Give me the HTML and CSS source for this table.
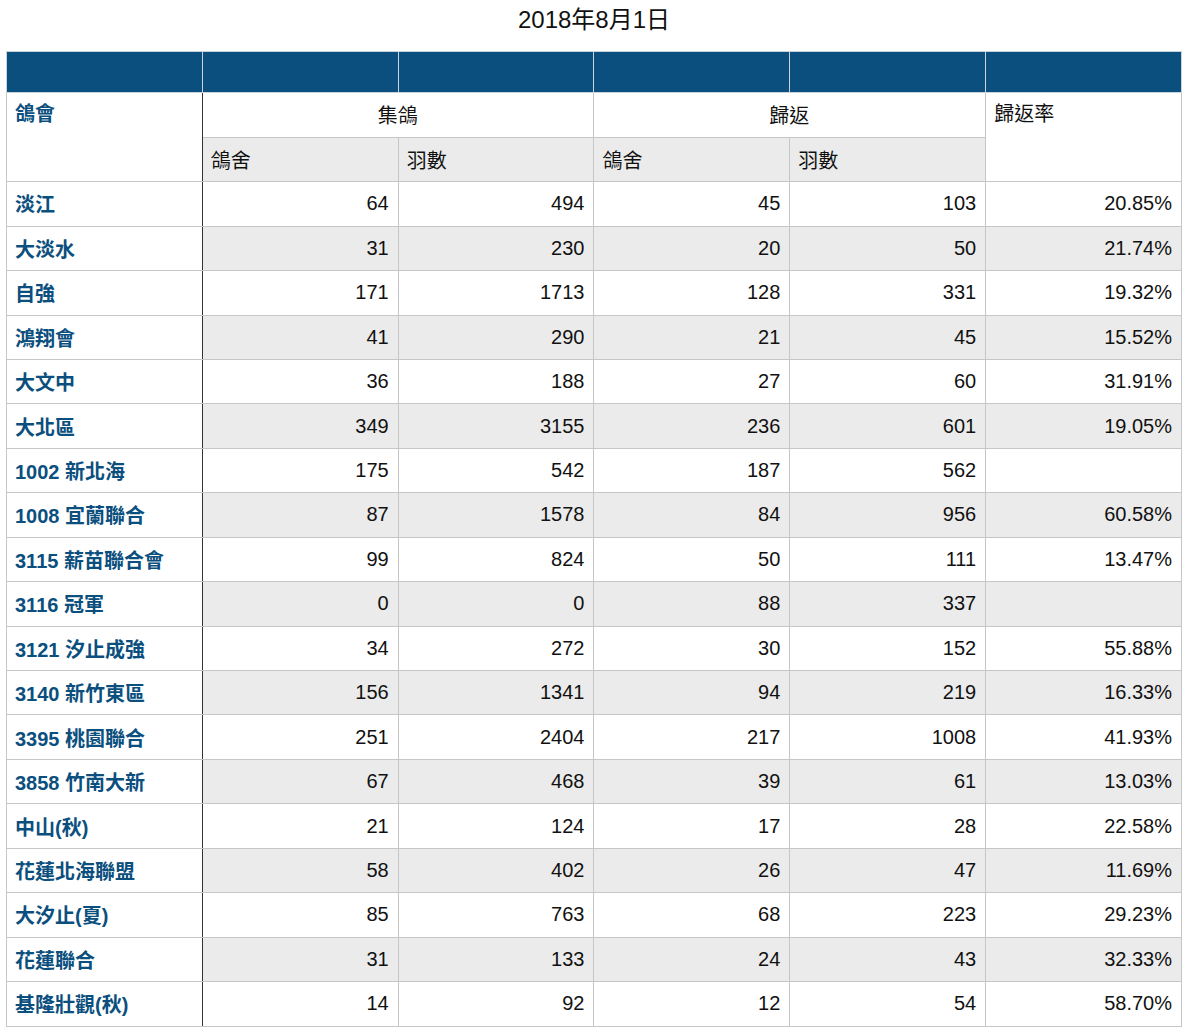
FILE: index.html
```html
<!DOCTYPE html>
<html lang="zh-Hant">
<head>
<meta charset="utf-8">
<title>2018年8月1日</title>
<link rel="stylesheet" href="styles.css">
</head>
<body>
<div class="page">
  <h1 class="title">2018年8月1日</h1>
  <table class="report">
    <thead>
      <tr class="band">
        <th></th><th></th><th></th><th></th><th></th><th></th>
      </tr>
      <tr class="group">
        <th class="club-head" rowspan="2">鴿會</th>
        <th class="center" colspan="2">集鴿</th>
        <th class="center" colspan="2">歸返</th>
        <th class="rate-head" rowspan="2">歸返率</th>
      </tr>
      <tr class="sub">
        <th>鴿舍</th><th>羽數</th><th>鴿舍</th><th>羽數</th>
      </tr>
    </thead>
    <tbody>
      <tr><td class="club">淡江</td><td>64</td><td>494</td><td>45</td><td>103</td><td>20.85%</td></tr>
      <tr><td class="club">大淡水</td><td>31</td><td>230</td><td>20</td><td>50</td><td>21.74%</td></tr>
      <tr><td class="club">自強</td><td>171</td><td>1713</td><td>128</td><td>331</td><td>19.32%</td></tr>
      <tr><td class="club">鴻翔會</td><td>41</td><td>290</td><td>21</td><td>45</td><td>15.52%</td></tr>
      <tr><td class="club">大文中</td><td>36</td><td>188</td><td>27</td><td>60</td><td>31.91%</td></tr>
      <tr><td class="club">大北區</td><td>349</td><td>3155</td><td>236</td><td>601</td><td>19.05%</td></tr>
      <tr><td class="club">1002 新北海</td><td>175</td><td>542</td><td>187</td><td>562</td><td></td></tr>
      <tr><td class="club">1008 宜蘭聯合</td><td>87</td><td>1578</td><td>84</td><td>956</td><td>60.58%</td></tr>
      <tr><td class="club">3115 薪苗聯合會</td><td>99</td><td>824</td><td>50</td><td>111</td><td>13.47%</td></tr>
      <tr><td class="club">3116 冠軍</td><td>0</td><td>0</td><td>88</td><td>337</td><td></td></tr>
      <tr><td class="club">3121 汐止成強</td><td>34</td><td>272</td><td>30</td><td>152</td><td>55.88%</td></tr>
      <tr><td class="club">3140 新竹東區</td><td>156</td><td>1341</td><td>94</td><td>219</td><td>16.33%</td></tr>
      <tr><td class="club">3395 桃園聯合</td><td>251</td><td>2404</td><td>217</td><td>1008</td><td>41.93%</td></tr>
      <tr><td class="club">3858 竹南大新</td><td>67</td><td>468</td><td>39</td><td>61</td><td>13.03%</td></tr>
      <tr><td class="club">中山(秋)</td><td>21</td><td>124</td><td>17</td><td>28</td><td>22.58%</td></tr>
      <tr><td class="club">花蓮北海聯盟</td><td>58</td><td>402</td><td>26</td><td>47</td><td>11.69%</td></tr>
      <tr><td class="club">大汐止(夏)</td><td>85</td><td>763</td><td>68</td><td>223</td><td>29.23%</td></tr>
      <tr><td class="club">花蓮聯合</td><td>31</td><td>133</td><td>24</td><td>43</td><td>32.33%</td></tr>
      <tr><td class="club">基隆壯觀(秋)</td><td>14</td><td>92</td><td>12</td><td>54</td><td>58.70%</td></tr>
    </tbody>
  </table>
</div>
</body>
</html>
```

FILE: styles.css
```css
html, body {
  margin: 0;
  padding: 0;
  background: #ffffff;
}

body {
  font-family: "Liberation Sans", "Noto Sans CJK TC", sans-serif;
  color: #111111;
}

.page {
  padding: 0 6px 0 6px;
}

.title {
  margin: 0;
  padding-top: 5px;
  height: 30px;
  line-height: 30px;
  margin-bottom: 16px;
  text-align: center;
  font-size: 24px;
  font-weight: normal;
  color: #111111;
}

.report {
  width: 100%;
  border-collapse: collapse;
  table-layout: fixed;
  font-size: 20px;
}

.report th,
.report td {
  border: 1px solid #c6c6c6;
  padding: 0 9px 0 8px;
  box-sizing: border-box;
}

.band th {
  background: #0b4f7e;
  border-color: #c8d3dc;
  height: 40.5px;
}

.report thead th {
  font-weight: normal;
  text-align: left;
}

.group th {
  height: 45px;
  background: #ffffff;
  vertical-align: middle;
}

.group th.center {
  text-align: center;
}

.group th.club-head,
.group th.rate-head {
  vertical-align: top;
  padding-top: 8px;
  line-height: 26px;
}

.group th.club-head {
  color: #0b4f7e;
  font-weight: bold;
  border-right: 1px solid #333333;
}

.sub th {
  height: 44.7px;
  background: #ebebeb;
}

.report tbody tr {
  height: 44.44px;
}

.report tbody td {
  text-align: right;
  background: #ffffff;
}

.report tbody tr:nth-child(even) td {
  background: #ebebeb;
}

.report tbody td.club,
.report tbody tr:nth-child(even) td.club {
  text-align: left;
  background: #ffffff;
  color: #0b4f7e;
  font-weight: bold;
  border-right: 1px solid #333333;
}
```
